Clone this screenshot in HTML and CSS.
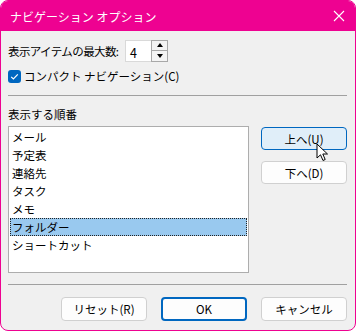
FILE: index.html
```html
<!DOCTYPE html>
<html lang="ja">
<head>
    <meta charset="UTF-8">
    <title>ナビゲーション オプション</title>
    <link rel="stylesheet" href="styles.css">
</head>
<body>
    <div class="window">
        <div class="titlebar">
            <span class="title">ナビゲーション オプション</span>
            <svg class="close" width="12" height="12" viewBox="0 0 12 12">
                <path d="M1 1 L11 11 M11 1 L1 11" stroke="#fff" stroke-width="1.1" fill="none"/>
            </svg>
        </div>
        <div class="content">
            <div class="row-max">
                <span class="label">表示アイテムの最大数:</span>
                <div class="spin">
                    <div class="spin-value">4</div>
                    <div class="spin-buttons">
                        <div class="spin-btn"><span class="tri-up"></span></div>
                        <div class="spin-btn"><span class="tri-down"></span></div>
                    </div>
                </div>
            </div>
            <label class="check-row">
                <span class="checkbox">
                    <svg width="13" height="13" viewBox="0 0 13 13">
                        <path d="M3.2 6.8 L5.4 9 L9.8 4.3" stroke="#fff" stroke-width="1.2" fill="none"/>
                    </svg>
                </span>
                <span>コンパクト ナビゲーション(C)</span>
            </label>
            <div class="separator sep-top"></div>
            <div class="order-label">表示する順番</div>
            <div class="order-area">
                <ul class="listbox">
                    <li>メール</li>
                    <li>予定表</li>
                    <li>連絡先</li>
                    <li>タスク</li>
                    <li>メモ</li>
                    <li class="selected">フォルダー</li>
                    <li>ショートカット</li>
                </ul>
                <div class="side-buttons">
                    <button class="btn btn-hover">上へ(U)</button>
                    <button class="btn">下へ(D)</button>
                    <svg class="cursor" width="14" height="20" viewBox="0 0 14 20">
                        <path d="M1 1 L1 15 L4.5 11.8 L7 17.5 L9.2 16.5 L6.8 11 L11.5 11 Z" fill="#fff" stroke="#000" stroke-width="1" stroke-linejoin="round"/>
                    </svg>
                </div>
            </div>
            <div class="separator sep-bottom"></div>
            <div class="footer-buttons">
                <button class="btn">リセット(R)</button>
                <button class="btn btn-default">OK</button>
                <button class="btn">キャンセル</button>
            </div>
        </div>
    </div>
</body>
</html>
```

FILE: styles.css
```css
body {
    margin: 0;
    background-color: #fff;
    font-family: "Noto Sans CJK JP", "Noto Sans", sans-serif;
    font-size: 11.5px;
    color: #000;
}

.window {
    width: 356px;
    height: 331px;
    box-sizing: border-box;
    border: 1px solid #ee0291;
    border-radius: 8px;
    background-color: #f0f0f0;
    overflow: hidden;
}

.titlebar {
    height: 30px;
    background-color: #ee0291;
    color: #fff;
    display: flex;
    align-items: center;
    justify-content: space-between;
    padding: 0 9px 0 9px;
}

.title {
    font-size: 12px;
}

.close {
    margin-right: 1px;
}

.content {
    padding: 8px 7px 0 7px;
}

.row-max {
    display: flex;
    align-items: center;
    height: 23px;
}

.label {
    width: 117px;
    flex-shrink: 0;
    white-space: nowrap;
    letter-spacing: -0.6px;
}

.spin {
    display: flex;
    height: 22px;
}

.spin-value {
    width: 26px;
    height: 22px;
    box-sizing: border-box;
    background-color: #fff;
    border: 1px solid #d9d9d9;
    border-right: none;
    padding: 2px 0 0 4px;
    font-size: 12.5px;
}

.spin-buttons {
    display: flex;
    flex-direction: column;
    width: 17px;
    border: 1px solid #a8a8a8;
    box-sizing: border-box;
    background-color: #f4f4f4;
}

.spin-btn {
    flex: 1;
    display: flex;
    align-items: center;
    justify-content: center;
}

.spin-btn + .spin-btn {
    border-top: 1px solid #a8a8a8;
}

.tri-up {
    border-left: 3.5px solid transparent;
    border-right: 3.5px solid transparent;
    border-bottom: 4px solid #000;
}

.tri-down {
    border-left: 3.5px solid transparent;
    border-right: 3.5px solid transparent;
    border-top: 4px solid #000;
}

.check-row {
    display: flex;
    align-items: center;
    gap: 3px;
    margin-top: 4px;
    height: 20px;
}

.checkbox {
    width: 13px;
    height: 13px;
    border-radius: 3px;
    background-color: #0067c0;
    display: flex;
}

.separator {
    height: 1px;
    background-color: #a0a0a0;
    margin-right: 1px;
}

.sep-top {
    margin-top: 9px;
}

.order-label {
    margin-top: 8px;
    height: 20px;
    line-height: 20px;
}

.order-area {
    display: flex;
    margin-top: 2px;
}

.listbox {
    list-style: none;
    margin: 0;
    padding: 1px 1px 0 1px;
    width: 241px;
    height: 147px;
    box-sizing: border-box;
    background-color: #fff;
    border: 1px solid #adadad;
}

.listbox li {
    height: 18px;
    line-height: 18px;
    padding-left: 2px;
    box-sizing: border-box;
}

.listbox li.selected {
    background-color: #99c9ef;
    outline: 1px dotted #222;
    outline-offset: -1px;
}

.side-buttons {
    position: relative;
    display: flex;
    flex-direction: column;
    gap: 11px;
    margin-left: 12px;
    padding-top: 1px;
}

.btn {
    width: 86px;
    height: 23px;
    box-sizing: border-box;
    font-family: inherit;
    font-size: 11.5px;
    color: #000;
    background-color: #fdfdfd;
    border: 1px solid #d0d0d0;
    border-radius: 4px;
    padding: 0;
}

.btn-hover {
    background-color: #e0eef9;
    border-color: #0067c0;
}

.btn-default {
    border: 2px solid #0067c0;
    background-color: #fdfdfd;
}

.cursor {
    position: absolute;
    left: 55px;
    top: 17px;
}

.sep-bottom {
    margin-top: 11px;
}

.footer-buttons {
    display: flex;
    justify-content: flex-end;
    gap: 14px;
    margin-top: 12px;
    padding-right: 1px;
}

.footer-buttons .btn {
    height: 24px;
}
```
